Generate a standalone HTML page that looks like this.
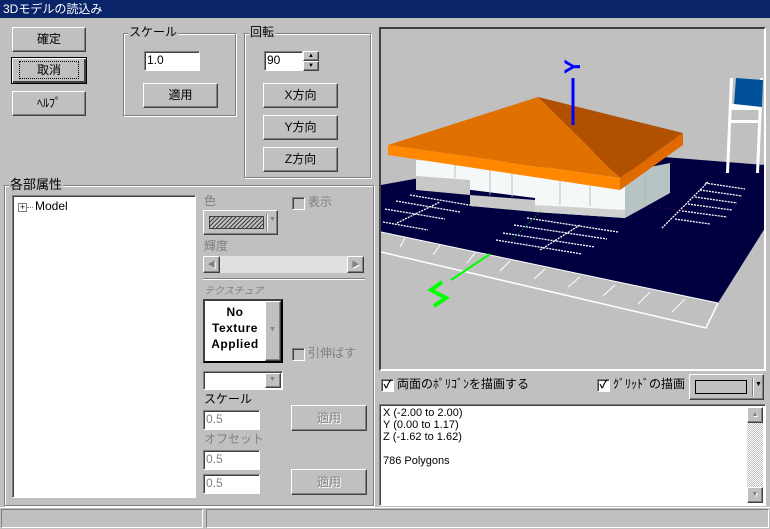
<!DOCTYPE html>
<html><head><meta charset="utf-8">
<style>
*{box-sizing:border-box;margin:0;padding:0}
body{width:770px;height:529px;background:#c0c0c0;font-family:"Liberation Sans","Noto Sans CJK JP",sans-serif;font-size:12px;color:#000;position:relative;overflow:hidden}
.a{position:absolute}
.title{left:0;top:0;width:770px;height:18px;background:#0a246a;color:#fff;font-size:12px;line-height:18px;padding-left:3px}
.btn{position:absolute;background:#c0c0c0;border:1px solid;border-color:#fff #404040 #404040 #fff;box-shadow:inset -1px -1px #808080;text-align:center;font-size:12px}
.btn.dis{color:#808080;text-shadow:1px 1px #fff}
.sunk{position:absolute;background:#fff;border:1px solid;border-color:#808080 #fff #fff #808080;box-shadow:inset 1px 1px #404040}
.grp{position:absolute;border:1px solid #808080;box-shadow:1px 1px #fff,inset 1px 1px #fff}
.lbl{position:absolute;background:#c0c0c0;padding:0 1px;font-size:12px;line-height:13px}
.dis{color:#808080}
.cb{position:absolute;width:13px;height:13px;background:#fff;border:1px solid;border-color:#808080 #fff #fff #808080;box-shadow:inset 1px 1px #404040}
.cb.g{background:#c0c0c0}
.inp{font-size:12px;line-height:17px;padding-left:2px}
</style></head><body>
<div class="a title">3Dモデルの読込み</div>

<div class="btn" style="left:12px;top:27px;width:74px;height:25px;line-height:23px">確定</div>
<div class="btn" style="left:11px;top:57px;width:76px;height:27px;line-height:25px;border:1px solid #000;box-shadow:inset 1px 1px #fff,inset -2px -2px #404040"><span style="outline:1px dotted #000;outline-offset:1px;padding:0 16px">取消</span></div>
<div class="btn" style="left:12px;top:91px;width:74px;height:25px;line-height:23px">ﾍﾙﾌﾟ</div>

<div class="grp" style="left:123px;top:33px;width:113px;height:83px"></div>
<div class="lbl" style="left:128px;top:26px">スケール</div>
<div class="sunk inp" style="left:144px;top:51px;width:56px;height:20px">1.0</div>
<div class="btn" style="left:143px;top:83px;width:75px;height:25px;line-height:23px">適用</div>

<div class="grp" style="left:244px;top:33px;width:127px;height:145px"></div>
<div class="lbl" style="left:249px;top:26px">回転</div>
<div class="sunk inp" style="left:264px;top:51px;width:39px;height:20px">90</div>
<div class="btn" style="left:303px;top:51px;width:16px;height:10px;font-size:6px;line-height:8px">▲</div>
<div class="btn" style="left:303px;top:61px;width:16px;height:10px;font-size:6px;line-height:8px">▼</div>
<div class="btn" style="left:263px;top:83px;width:75px;height:25px;line-height:23px">X方向</div>
<div class="btn" style="left:263px;top:115px;width:75px;height:25px;line-height:23px">Y方向</div>
<div class="btn" style="left:263px;top:147px;width:75px;height:25px;line-height:23px">Z方向</div>

<div class="grp" style="left:4px;top:185px;width:370px;height:321px"></div>
<div class="lbl" style="left:9px;top:178px;font-size:13px">各部属性</div>
<div class="sunk" style="left:12px;top:195px;width:184px;height:303px">
 <div class="a" style="left:5px;top:7px;width:9px;height:9px;border:1px solid #808080;font-size:9px;line-height:7px;text-align:center">+</div>
 <div class="a" style="left:14px;top:11px;width:6px;border-top:1px dotted #808080"></div>
 <div class="a" style="left:22px;top:3px;font-size:12px">Model</div>
</div>

<div class="lbl dis" style="left:203px;top:195px">色</div>
<div class="cb g" style="left:292px;top:197px"></div>
<div class="lbl dis" style="left:307px;top:196px">表示</div>
<div class="btn" style="left:203px;top:210px;width:75px;height:25px">
 <div class="a" style="left:5px;top:5px;width:55px;height:13px;border:1px solid #404040;background:repeating-linear-gradient(135deg,#404040 0 1px,#c0c0c0 1px 3px)"></div>
 <div class="a" style="left:62px;top:3px;height:17px;border-left:1px solid #808080;box-shadow:1px 0 #fff"></div>
 <div class="a dis" style="left:65px;top:5px;font-size:7px">▼</div>
</div>
<div class="lbl dis" style="left:203px;top:240px">輝度</div>
<div class="a" style="left:203px;top:256px;width:161px;height:17px;background:#e0e0e0"></div>
<div class="btn dis" style="left:203px;top:256px;width:17px;height:17px;font-size:8px;line-height:15px">◀</div>
<div class="btn dis" style="left:347px;top:256px;width:17px;height:17px;font-size:8px;line-height:15px">▶</div>
<div class="a" style="left:203px;top:278px;width:162px;border-top:1px solid #808080;border-bottom:1px solid #fff"></div>
<div class="lbl dis" style="left:203px;top:285px;font-size:10px;font-style:italic">テクスチュア</div>
<div class="a" style="left:203px;top:299px;width:80px;height:64px;background:#fff;border:2px solid;border-color:#404040 #000 #000 #404040"></div>
<div class="a" style="left:205px;top:301px;width:60px;text-align:center;font-weight:bold;font-size:12px;line-height:16px;padding-top:3px;letter-spacing:.5px">No<br>Texture<br>Applied</div>
<div class="btn" style="left:265px;top:301px;width:16px;height:60px"><span class="dis" style="font-size:7px;position:absolute;left:3px;top:24px">▼</span></div>
<div class="cb g" style="left:292px;top:348px"></div>
<div class="lbl dis" style="left:307px;top:347px">引伸ばす</div>
<div class="sunk" style="left:203px;top:371px;width:80px;height:19px"></div>
<div class="btn" style="left:265px;top:373px;width:16px;height:15px"><span class="dis" style="font-size:7px;position:absolute;left:3px;top:2px">▼</span></div>
<div class="lbl" style="left:203px;top:393px">スケール</div>
<div class="sunk inp dis" style="left:203px;top:410px;width:57px;height:20px">0.5</div>
<div class="btn dis" style="left:291px;top:405px;width:76px;height:26px;line-height:24px">適用</div>
<div class="lbl dis" style="left:203px;top:433px">オフセット</div>
<div class="sunk inp dis" style="left:203px;top:450px;width:57px;height:20px">0.5</div>
<div class="sunk inp dis" style="left:203px;top:474px;width:57px;height:20px">0.5</div>
<div class="btn dis" style="left:291px;top:469px;width:76px;height:26px;line-height:24px">適用</div>

<!-- 3D view -->
<div class="a" style="left:379px;top:27px;width:387px;height:344px;border:2px solid;border-color:#404040 #fff #fff #404040;background:#c0c0c0;overflow:hidden">
<svg width="383" height="340" viewBox="381 29 383 340" style="position:absolute;left:0;top:0">
 <polygon points="381,185 574,150 765,165 765,228 718,303 381,232" fill="#000040"/>
 <polyline points="381,252 706,328 718,303" fill="none" stroke="#fff" stroke-width="1.5"/>
 <polyline points="381,232 718,303" fill="none" stroke="#fff" stroke-width="1"/>
 <g stroke="#fff" stroke-width="1">
  <line x1="405" y1="238" x2="400" y2="247"/><line x1="440" y1="245" x2="433" y2="255"/><line x1="475" y1="253" x2="467" y2="263"/><line x1="510" y1="261" x2="500" y2="271"/><line x1="545" y1="269" x2="534" y2="279"/><line x1="580" y1="277" x2="568" y2="287"/><line x1="615" y1="285" x2="603" y2="296"/><line x1="650" y1="292" x2="638" y2="304"/><line x1="685" y1="299" x2="672" y2="312"/>
 </g>
 <g stroke="#fff" stroke-width="1.3" stroke-dasharray="2 1">
  <line x1="410" y1="195" x2="475" y2="206"/><line x1="396" y1="201" x2="460" y2="212"/><line x1="385" y1="209" x2="445" y2="219"/><line x1="383" y1="222" x2="428" y2="230"/><line x1="397" y1="223" x2="440" y2="202"/>
  <line x1="527" y1="218" x2="618" y2="232"/><line x1="514" y1="225" x2="607" y2="239"/><line x1="503" y1="233" x2="595" y2="247"/><line x1="496" y1="240" x2="582" y2="254"/><line x1="540" y1="250" x2="580" y2="225"/>
  <line x1="705" y1="183" x2="745" y2="189"/><line x1="700" y1="190" x2="742" y2="196"/><line x1="695" y1="197" x2="737" y2="203"/><line x1="688" y1="204" x2="732" y2="210"/><line x1="682" y1="211" x2="727" y2="217"/><line x1="675" y1="219" x2="710" y2="224"/><line x1="662" y1="228" x2="708" y2="182"/>
 </g>
 <line x1="550" y1="200" x2="688" y2="210" stroke="#800030" stroke-dasharray="1 4"/>
 <!-- building -->
 <polygon points="416,160 625,172 625,218 535,212 535,198 416,183" fill="#f4f8f8"/>
 <polygon points="416,176 470,180 470,195 535,200 535,212 470,206 470,195 416,190" fill="#c8c8c8"/>
 <polygon points="535,205 625,210 625,218 535,212" fill="#d0d0d0"/>
 <polygon points="625,172 670,163 670,193 625,218" fill="#b8c4c4"/>
 <g stroke="#b0b0b0" stroke-width="0.8"><line x1="455" y1="164" x2="455" y2="178"/><line x1="490" y1="166" x2="490" y2="195"/><line x1="512" y1="167" x2="512" y2="197"/><line x1="560" y1="168" x2="560" y2="205"/><line x1="590" y1="170" x2="590" y2="206"/><line x1="645" y1="168" x2="645" y2="205"/></g>
 <!-- roof -->
 <polygon points="538,97 388,145 620,178" fill="#e07000"/>
 <polygon points="538,97 683,133 620,178" fill="#b05000"/>
 <polygon points="388,145 620,178 620,190 388,155" fill="#ff8800"/>
 <polygon points="620,178 683,133 683,145 620,190" fill="#e06a00"/>
 <!-- sign -->
 <g fill="#fff"><polygon points="733,78 730,78 726,173 729,173"/><polygon points="763,78 760,78 756,173 759,173"/><rect x="731" y="104" width="30" height="6"/><rect x="731" y="120" width="28" height="3"/></g>
 <polygon points="736,78 763,80 762,107 734,104" fill="#00509a"/>
 <!-- axes -->
 <line x1="573" y1="78" x2="573" y2="125" stroke="#0000ff" stroke-width="3"/>
 <text x="560" y="70" fill="#0000ff" font-size="22" font-weight="bold" transform="rotate(-90 572 62)">Y</text>
 <line x1="490" y1="254" x2="451" y2="280" stroke="#00ff00" stroke-width="2"/>
 <line x1="540" y1="212" x2="510" y2="242" stroke="#00c000" stroke-dasharray="1 2"/>
 <polyline points="442,282 431,290 446,298 434,306" fill="none" stroke="#00ff00" stroke-width="4"/>
</svg>
</div>

<div class="cb" style="left:381px;top:379px;font-size:11px;line-height:10px;text-align:center;font-weight:bold">✓</div>
<div class="lbl" style="left:396px;top:378px">両面のﾎﾟﾘｺﾞﾝを描画する</div>
<div class="cb" style="left:597px;top:379px;font-size:11px;line-height:10px;text-align:center;font-weight:bold">✓</div>
<div class="lbl" style="left:612px;top:378px">ｸﾞﾘｯﾄﾞの描画</div>
<div class="btn" style="left:689px;top:374px;width:75px;height:26px">
 <div class="a" style="left:5px;top:5px;width:52px;height:14px;border:1px solid #000;background:#c0c0c0"></div>
 <div class="a" style="left:62px;top:3px;height:18px;border-left:1px solid #808080;box-shadow:1px 0 #fff"></div>
 <div class="a" style="left:65px;top:6px;font-size:7px">▼</div>
</div>
<div class="sunk" style="left:379px;top:404px;width:387px;height:102px;font-size:11px;line-height:12px;padding:2px 0 0 3px">X (-2.00 to 2.00)<br>Y (0.00 to 1.17)<br>Z (-1.62 to 1.62)<br><br>786 Polygons
 <div class="a" style="left:367px;top:2px;width:16px;height:96px;background:repeating-conic-gradient(#c0c0c0 0 25%,#fff 0 50%) 0 0/2px 2px"></div>
 <div class="btn dis" style="left:367px;top:2px;width:16px;height:16px;font-size:7px;line-height:14px">▲</div>
 <div class="btn dis" style="left:367px;top:82px;width:16px;height:16px;font-size:7px;line-height:14px">▼</div>
</div>

<div class="a" style="left:0;top:507px;width:770px;border-top:1px solid #fff"></div>
<div class="a" style="left:1px;top:509px;width:202px;height:19px;border:1px solid;border-color:#808080 #fff #fff #808080"></div>
<div class="a" style="left:206px;top:509px;width:563px;height:19px;border:1px solid;border-color:#808080 #fff #fff #808080"></div>
</body></html>
